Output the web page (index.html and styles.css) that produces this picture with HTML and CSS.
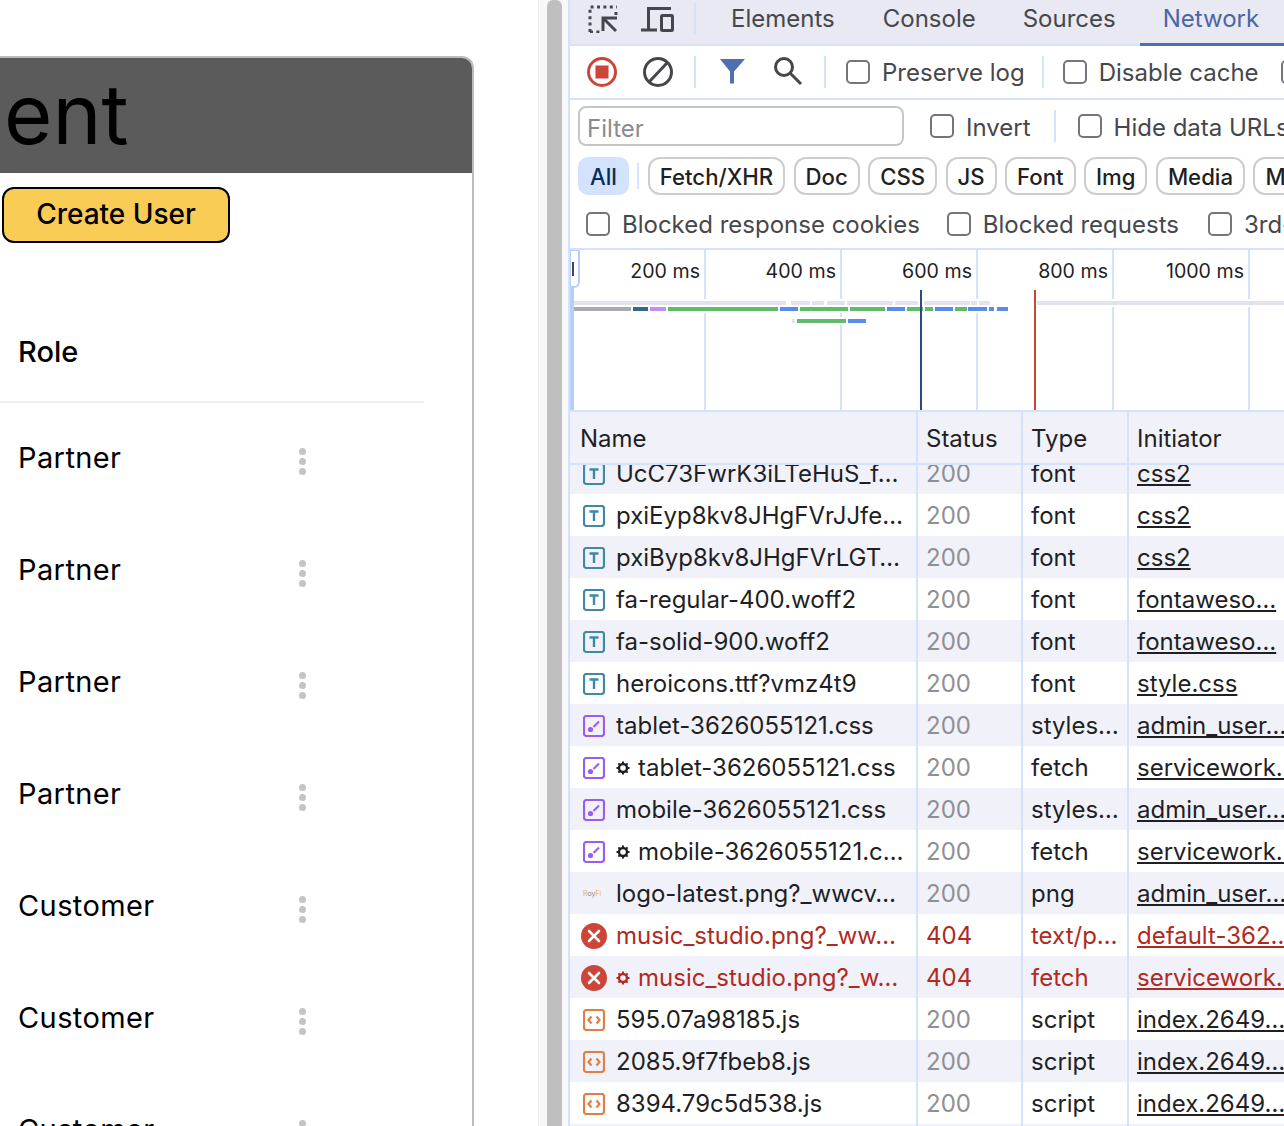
FILE: index.html
```html
<!DOCTYPE html>
<html lang="en">
<head>
<meta charset="utf-8">
<title>User Management - DevTools</title>
<link rel="stylesheet" href="styles.css">
</head>
<body>
<svg class="defs" width="0" height="0" aria-hidden="true">
  <symbol id="i-font" viewBox="0 0 22 22"><rect x="1" y="1" width="20" height="20" rx="2.5" fill="none" stroke="#3f88a6" stroke-width="2.200"/><path d="M6.500 6.500h9M11 6.500v9.500" fill="none" stroke="#3f88a6" stroke-width="2.400"/></symbol>
  <symbol id="i-css" viewBox="0 0 22 22"><rect x="1" y="1" width="20" height="20" rx="2.5" fill="none" stroke="#9b5cf0" stroke-width="2.200"/><path d="M16 6.500 10.500 12" fill="none" stroke="#9b5cf0" stroke-width="2.200"/><circle cx="7.500" cy="14.500" r="2.600" fill="#9b5cf0"/></symbol>
  <symbol id="i-js" viewBox="0 0 22 22"><rect x="1" y="1" width="20" height="20" rx="2.5" fill="none" stroke="#e07f45" stroke-width="2.200"/><path d="M8.500 7.500 5.500 11l3 3.500M13.500 7.500l3 3.500-3 3.500" fill="none" stroke="#e07f45" stroke-width="2.200"/></symbol>
  <symbol id="i-err" viewBox="0 0 26 26"><circle cx="13" cy="13" r="13" fill="#cc4539"/><path d="M8 8l10 10M18 8 8 18" fill="none" stroke="#fff" stroke-width="2.600" stroke-linecap="round"/></symbol>
  <symbol id="i-gear" viewBox="0 0 14 14"><circle cx="7" cy="7" r="4" fill="none" stroke="currentColor" stroke-width="2.400"/><path d="M7 .5v2.500M7 11v2.500M.5 7H3M11 7h2.500M2.400 2.400l1.800 1.800M9.800 9.800l1.800 1.800M11.600 2.400 9.800 4.200M4.200 9.800l-1.800 1.800" fill="none" stroke="currentColor" stroke-width="2"/></symbol>
</svg>

<main class="page">
  <section class="card">
    <header class="card-head"><h1 class="card-title">ent</h1></header>
    <button class="create-btn" type="button">Create User</button>
    <div class="role-head">Role</div>
    <div class="role-row"><span class="role-name">Partner</span><span class="dots"><i></i><i></i><i></i></span></div>
    <div class="role-row"><span class="role-name">Partner</span><span class="dots"><i></i><i></i><i></i></span></div>
    <div class="role-row"><span class="role-name">Partner</span><span class="dots"><i></i><i></i><i></i></span></div>
    <div class="role-row"><span class="role-name">Partner</span><span class="dots"><i></i><i></i><i></i></span></div>
    <div class="role-row"><span class="role-name">Customer</span><span class="dots"><i></i><i></i><i></i></span></div>
    <div class="role-row"><span class="role-name">Customer</span><span class="dots"><i></i><i></i><i></i></span></div>
    <div class="role-row"><span class="role-name">Customer</span><span class="dots"><i></i><i></i><i></i></span></div>
  </section>
</main>

<div class="gutter"><div class="scrollbar"></div></div>

<aside class="devtools">
  <nav class="tabs">
    <svg class="ic-inspect" width="30" height="28" viewBox="0 0 30 28"><path d="M2 27V2h27" fill="none" stroke="#46474c" stroke-width="3" stroke-dasharray="3 3.400"/><path d="M28 7v3M2 27h12" fill="none" stroke="#46474c" stroke-width="3" stroke-dasharray="3 3.400"/><path d="M15 13l13 13M15 26V13h14" fill="none" stroke="#46474c" stroke-width="3"/></svg>
    <svg class="ic-device" width="33" height="26" viewBox="0 0 33 26"><path d="M7.500 24V2.500H30M0 24h16" fill="none" stroke="#46474c" stroke-width="3"/><rect x="20.500" y="9.500" width="11" height="15" rx="1" fill="none" stroke="#46474c" stroke-width="3"/></svg>
    <span class="tsep"></span>
    <span class="tab tab-elements">Elements</span>
    <span class="tab tab-console">Console</span>
    <span class="tab tab-sources">Sources</span>
    <span class="tab tab-network">Network</span>
  </nav>

  <div class="bar bar-controls">
    <svg class="ic-record" width="30" height="30" viewBox="0 0 30 30"><circle cx="15" cy="15" r="13.500" fill="none" stroke="#cc4539" stroke-width="3"/><rect x="8.500" y="8.500" width="13" height="13" fill="#cc4539"/></svg>
    <svg class="ic-clear" width="30" height="30" viewBox="0 0 30 30"><circle cx="15" cy="15" r="13.500" fill="none" stroke="#46474c" stroke-width="3"/><path d="M6.500 24.500 24 6" fill="none" stroke="#46474c" stroke-width="3"/></svg>
    <span class="sep sep-a"></span>
    <svg class="ic-filter" width="25" height="25" viewBox="0 0 25 25"><path d="M0 0h25L14 12.500V24.500h-4V12.500z" fill="#4f6fae"/></svg>
    <svg class="ic-search" width="30" height="30" viewBox="0 0 30 30"><circle cx="11" cy="11" r="8.500" fill="none" stroke="#46474c" stroke-width="3"/><path d="M17 17l11 11" fill="none" stroke="#46474c" stroke-width="3"/></svg>
    <span class="sep sep-b"></span>
    <span class="cb cb-preserve"></span><span class="lbl">Preserve log</span>
    <span class="sep sep-c"></span>
    <span class="cb cb-disable"></span><span class="lbl">Disable cache</span>
    <span class="cb cb-clipped"></span>
  </div>

  <div class="filter-block">
    <div class="row-filter">
      <div class="filter-input">Filter</div>
      <span class="cb cb-invert"></span><span class="lbl">Invert</span>
      <span class="sep sep-d"></span>
      <span class="cb cb-hide"></span><span class="lbl">Hide data URLs</span>
    </div>
    <div class="row-chips">
      <span class="chip chip-on">All</span>
      <span class="sep sep-e"></span>
      <span class="chip">Fetch/XHR</span>
      <span class="chip">Doc</span>
      <span class="chip">CSS</span>
      <span class="chip">JS</span>
      <span class="chip">Font</span>
      <span class="chip">Img</span>
      <span class="chip">Media</span>
      <span class="chip">Manifest</span>
    </div>
    <div class="row-blocked">
      <span class="cb cb-b1"></span><span class="lbl">Blocked response cookies</span>
      <span class="cb cb-b2"></span><span class="lbl">Blocked requests</span>
      <span class="cb cb-b3"></span><span class="lbl">3rd-party requests</span>
    </div>
  </div>

  <div class="overview">
    <svg class="overview-chart" width="714" height="160" viewBox="570 250 714 160">
      <g class="grid">
        <rect x="704" y="250" width="2" height="160"/><rect x="840" y="250" width="2" height="160"/><rect x="976" y="250" width="2" height="160"/><rect x="1112" y="250" width="2" height="160"/><rect x="1248" y="250" width="2" height="160"/>
      </g>
      <g class="halo">
        <rect x="574" y="299" width="436" height="14"/><rect x="1010" y="299" width="274" height="8"/><rect x="790" y="317" width="78" height="8"/>
      </g>
      <g class="tick-labels">
        <text x="700" y="277.500">200 ms</text><text x="836" y="277.500">400 ms</text><text x="972" y="277.500">600 ms</text><text x="1108" y="277.500">800 ms</text><text x="1244" y="277.500">1000 ms</text>
      </g>
      <g class="b-light">
        <rect x="574" y="301" width="212" height="4"/><rect x="791" y="301" width="19" height="4"/><rect x="812" y="301" width="12" height="4"/><rect x="827" y="301" width="18" height="4"/><rect x="847" y="301" width="46" height="4"/><rect x="895" y="301" width="23" height="4"/><rect x="924" y="301" width="46" height="4"/><rect x="971" y="301" width="6" height="4"/><rect x="979" y="301" width="11" height="4"/><rect x="1037" y="301" width="247" height="4"/><rect x="792" y="319" width="3" height="4"/>
      </g>
      <rect class="b-gray" x="574" y="307" width="57" height="4"/>
      <rect class="b-teal" x="633" y="307" width="15" height="4"/>
      <rect class="b-purple" x="650" y="307" width="16" height="4"/>
      <g class="b-green">
        <rect x="668" y="307" width="110" height="4"/><rect x="800" y="307" width="48" height="4"/><rect x="850" y="307" width="35" height="4"/><rect x="907" y="307" width="16" height="4"/><rect x="925" y="307" width="8" height="4"/><rect x="955" y="307" width="12" height="4"/><rect x="797" y="319" width="49" height="4"/>
      </g>
      <g class="b-blue">
        <rect x="780" y="307" width="18" height="4"/><rect x="887" y="307" width="18" height="4"/><rect x="935" y="307" width="18" height="4"/><rect x="968" y="307" width="19" height="4"/><rect x="989" y="307" width="5" height="4"/><rect x="997" y="307" width="11" height="4"/><rect x="848" y="319" width="18" height="4"/>
      </g>
      <rect class="m-navy" x="920" y="290" width="2" height="120"/>
      <rect class="m-red" x="1034" y="290" width="2" height="120"/>
      <rect class="handle-strip" x="570" y="250" width="4" height="160"/>
      <path class="handle" d="M570 250h9v32a5 5 0 0 1-5 5h-4z"/>
      <rect class="handle-tick" x="572" y="262" width="2" height="14"/>
    </svg>
  </div>

  <div class="net-table">
    <div class="net-row net-head"><div class="c c-name">Name</div><div class="c">Status</div><div class="c">Type</div><div class="c">Initiator</div></div>
    <div class="net-body">
      <div class="net-row r-first"><div class="c c-name"><svg class="ri"><use href="#i-font"/></svg>UcC73FwrK3iLTeHuS_f…</div><div class="c st">200</div><div class="c">font</div><div class="c in">css2</div></div>
      <div class="net-row"><div class="c c-name"><svg class="ri"><use href="#i-font"/></svg>pxiEyp8kv8JHgFVrJJfe…</div><div class="c st">200</div><div class="c">font</div><div class="c in">css2</div></div>
      <div class="net-row"><div class="c c-name"><svg class="ri"><use href="#i-font"/></svg>pxiByp8kv8JHgFVrLGT…</div><div class="c st">200</div><div class="c">font</div><div class="c in">css2</div></div>
      <div class="net-row"><div class="c c-name"><svg class="ri"><use href="#i-font"/></svg>fa-regular-400.woff2</div><div class="c st">200</div><div class="c">font</div><div class="c in">fontaweso…</div></div>
      <div class="net-row"><div class="c c-name"><svg class="ri"><use href="#i-font"/></svg>fa-solid-900.woff2</div><div class="c st">200</div><div class="c">font</div><div class="c in">fontaweso…</div></div>
      <div class="net-row"><div class="c c-name"><svg class="ri"><use href="#i-font"/></svg>heroicons.ttf?vmz4t9</div><div class="c st">200</div><div class="c">font</div><div class="c in">style.css</div></div>
      <div class="net-row"><div class="c c-name"><svg class="ri"><use href="#i-css"/></svg>tablet-3626055121.css</div><div class="c st">200</div><div class="c">styles…</div><div class="c in">admin_user…</div></div>
      <div class="net-row"><div class="c c-name"><svg class="ri"><use href="#i-css"/></svg><svg class="gear"><use href="#i-gear"/></svg>tablet-3626055121.css</div><div class="c st">200</div><div class="c">fetch</div><div class="c in">servicework…</div></div>
      <div class="net-row"><div class="c c-name"><svg class="ri"><use href="#i-css"/></svg>mobile-3626055121.css</div><div class="c st">200</div><div class="c">styles…</div><div class="c in">admin_user…</div></div>
      <div class="net-row"><div class="c c-name"><svg class="ri"><use href="#i-css"/></svg><svg class="gear"><use href="#i-gear"/></svg>mobile-3626055121.c…</div><div class="c st">200</div><div class="c">fetch</div><div class="c in">servicework…</div></div>
      <div class="net-row"><div class="c c-name"><span class="thumb"><b>R</b>oy<em>Fi</em></span>logo-latest.png?_wwcv…</div><div class="c st">200</div><div class="c">png</div><div class="c in">admin_user…</div></div>
      <div class="net-row is-err"><div class="c c-name"><svg class="ri ri-err"><use href="#i-err"/></svg>music_studio.png?_ww…</div><div class="c st">404</div><div class="c">text/p…</div><div class="c in">default-362…</div></div>
      <div class="net-row is-err"><div class="c c-name"><svg class="ri ri-err"><use href="#i-err"/></svg><svg class="gear"><use href="#i-gear"/></svg>music_studio.png?_w…</div><div class="c st">404</div><div class="c">fetch</div><div class="c in">servicework…</div></div>
      <div class="net-row"><div class="c c-name"><svg class="ri"><use href="#i-js"/></svg>595.07a98185.js</div><div class="c st">200</div><div class="c">script</div><div class="c in">index.2649…</div></div>
      <div class="net-row"><div class="c c-name"><svg class="ri"><use href="#i-js"/></svg>2085.9f7fbeb8.js</div><div class="c st">200</div><div class="c">script</div><div class="c in">index.2649…</div></div>
      <div class="net-row"><div class="c c-name"><svg class="ri"><use href="#i-js"/></svg>8394.79c5d538.js</div><div class="c st">200</div><div class="c">script</div><div class="c in">index.2649…</div></div>
      <div class="net-row"><div class="c c-name"></div><div class="c"></div><div class="c"></div><div class="c"></div></div>
    </div>
  </div>
</aside>
</body>
</html>
```
FILE: styles.css
```css
* { box-sizing: border-box; }
html, body { margin: 0; height: 1126px; overflow: hidden; background: #fff; }
body { display: flex; width: 1284px; font-family: Inter, "Noto Sans", sans-serif; color: #1f1f24; }
.defs { position: absolute; }
svg { flex: none; }

/* left page */
.page { flex: 0 0 538px; height: 1126px; overflow: hidden; padding-top: 56px; }
.card { width: 474px; height: 1200px; border: solid #bcbcbc; border-width: 2px 2px 0 0; border-radius: 0 12px 0 0; }
.card-head { height: 115px; background: #5b5b5b; border-radius: 0 10px 0 0; overflow: hidden; }
.card-title { margin: 0; padding-left: 4px; font-size: 83px; line-height: 112px; font-weight: 400; color: #000; }
.create-btn { display: block; width: 228px; height: 56px; margin: 14px 0 0 2px; padding: 0 0 2px; border: 2px solid #000; border-radius: 12px; background: #f9cd55; color: #000; font: 500 28px Inter, sans-serif; }
.role-head { width: 424px; height: 100px; margin-top: 60px; padding-left: 18px; border-bottom: 2px solid #f0f0f0; font-size: 29px; font-weight: 500; line-height: 97px; color: #000; }
.role-row { display: flex; align-items: center; width: 424px; height: 112px; padding: 0 0 4px 18px; font-size: 29px; letter-spacing: .4px; color: #000; }
.role-name { flex: 0 0 281px; }
.dots { display: flex; flex-direction: column; gap: 3px; margin-top: 8px; }
.dots i { display: block; width: 7px; height: 7px; border-radius: 50%; background: #c4c4c4; }

/* gutter */
.gutter { flex: 0 0 30px; height: 1126px; background: #f8f8f8; border-left: 1px solid #ececec; padding-left: 8px; }
.scrollbar { width: 15px; height: 100%; background: #bfbfbf; border-radius: 6px 6px 0 0; }

/* devtools */
.devtools { flex: 0 0 716px; height: 1126px; overflow: hidden; border-left: 2px solid #d3e3fd; font-size: 24px; display: flex; flex-direction: column; }
.tabs { display: flex; align-items: center; height: 46px; background: #e8e9f3; border-bottom: 2px solid #d3e3fd; position: relative; white-space: nowrap; padding-left: 18px; color: #46474c; flex: none; }
.ic-inspect { margin-top: -6px; }
.ic-device { margin: -6px 0 0 23px; }
.tsep { width: 2px; height: 32px; margin: -6px 0 0 20px; background: #d3e3fd; flex: none; }
.tab { font-size: 24px; line-height: 44px; height: 44px; margin-top: -7px; }
.tab-elements { margin-left: 35px; }
.tab-console { margin-left: 48px; }
.tab-sources { margin-left: 47px; }
.tab-network { margin-left: 47px; color: #4a66a5; }
.tabs::after { content: ""; position: absolute; left: 570px; right: 0; bottom: -2px; height: 3px; background: #4f6fae; }

.bar, .row-filter, .row-chips, .row-blocked { display: flex; align-items: center; white-space: nowrap; }
.bar-controls { height: 54px; border-bottom: 2px solid #d3e3fd; padding-left: 17px; color: #46474c; flex: none; }
.ic-clear { margin-left: 26px; }
.ic-filter { margin-top: -2px; }
.ic-search { margin: -2px 0 0 28px; }
.sep { display: block; width: 2px; height: 32px; background: #d3e3fd; flex: none; }
.sep-a { margin: 0 24px 0 21px; }
.sep-b { margin: 0 20px 0 21px; }
.sep-c { margin: 0 19px 0 17px; }
.cb { display: block; flex: none; width: 24px; height: 24px; border: 2px solid #74757a; border-radius: 5px; background: #fff; margin-right: 12px; }
.lbl { color: #46474c; flex: none; }
.cb-clipped { margin-left: 22px; }

.filter-block { height: 150px; border-bottom: 2px solid #d3e3fd; padding-left: 8px; flex: none; }
.row-filter { height: 46px; padding-top: 5px; color: #46474c; }
.row-filter .lbl { padding-top: 3px; }
.filter-input { width: 326px; height: 40px; border: 2px solid #c6c6c9; border-radius: 8px; padding-left: 7px; line-height: 42px; color: #8b8b8f; flex: none; margin-right: 26px; }
.sep-d { margin: 0 22px 0 23px; height: 32px; }

.row-chips { height: 38px; margin-top: 11px; gap: 8.4px; }
.chip { flex: none; height: 38px; padding: 0 10px; border: 2px solid #cbcdd0; border-radius: 12px; line-height: 35px; font-size: 22.2px; font-weight: 500; color: #1f1f24; }
.chip-on { border-color: #d3e3fd; background: #d3e3fd; color: #0a2a5c; border-radius: 10px; }
.sep-e { height: 26px; margin: 0; }

.row-blocked { height: 40px; margin-top: 9px; padding-left: 8px; }
.cb-b2 { margin-left: 27px; }
.cb-b3 { margin-left: 29px; }

.overview { height: 160px; flex: none; }
.overview-chart { display: block; }
.grid rect { fill: #d3e3fd; }
.halo rect { fill: #fff; }
.tick-labels text { font-family: Inter, sans-serif; font-size: 19.6px; text-anchor: end; fill: #1f1f24; }
.b-light rect { fill: #e3e3ee; }
.b-gray { fill: #a9a9b0; }
.b-teal { fill: #2f6a87; }
.b-purple { fill: #c48ff2; }
.b-green rect { fill: #62bb6a; }
.b-blue rect { fill: #5a8cec; }
.m-navy { fill: #2c4a85; }
.m-red { fill: #cc4539; }
.handle-strip { fill: #b8ccf8; }
.handle { fill: #fff; stroke: #b8ccf8; stroke-width: 2; }
.handle-tick { fill: #46474c; }

.net-table { flex: 1; min-height: 0; overflow: hidden; }
.net-row { display: grid; grid-template-columns: 348px 105px 106px 1fr; height: 42px; line-height: 44px; background: #fff; white-space: nowrap; }
.net-body .net-row:nth-child(odd) { background: #f1f1f9; }
.net-head { height: 55px; line-height: 53px; background: #f1f1f9; border-top: 2px solid #d3e3fd; border-bottom: 2px solid #d3e3fd; position: relative; z-index: 1; }
.r-first { margin-top: -13px; }
.c { padding-left: 8px; border-right: 2px solid #d3e3fd; overflow: hidden; height: 100%; }
.c:last-child { border-right: 0; }
.c-name { display: flex; align-items: center; padding: 1px 0 0 13px; }
.net-head .c-name { padding-left: 10px; }
.st { color: #8f8f94; }
.in { text-decoration: underline; }
.ri { flex: none; width: 22px; height: 22px; margin-right: 11px; }
.ri-err { width: 26px; height: 26px; margin: 0 9px 0 -2px; }
.gear { flex: none; width: 14px; height: 14px; margin-right: 8px; color: #1f1f24; }
.thumb { flex: none; width: 22px; margin-right: 11px; font-size: 7px; line-height: 10px; color: #8a8a8a; }
.thumb b { color: #e2b93b; font-weight: 400; }
.thumb em { color: #e2b93b; font-style: normal; }
.is-err .c { color: #b02a22; }
.is-err .gear { color: #b02a22; }
```
